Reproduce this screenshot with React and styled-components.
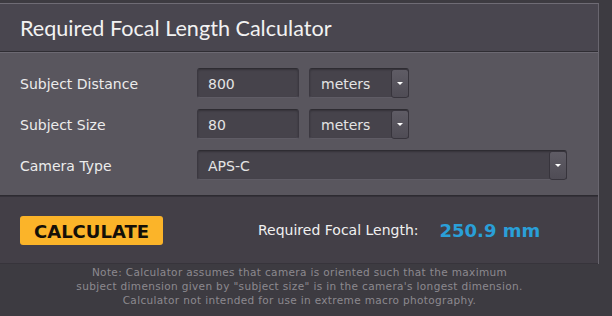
import React from "react";
import styled, { createGlobalStyle } from "styled-components";

const GlobalStyle = createGlobalStyle`
  body {
    margin: 0;
    background: #3d3b41;
    font-family: "DejaVu Sans", Verdana, sans-serif;
  }
`;

const Page = styled.div`
  width: 612px;
  height: 316px;
  overflow: hidden;
  padding-top: 3px;
  box-sizing: border-box;
`;

const Panel = styled.div`
  width: 599px;
  border-top: 1px solid #6f6c75;
  border-right: 1px solid #69666f;
  box-sizing: border-box;
`;

const Header = styled.div`
  height: 47px;
  display: flex;
  align-items: center;
  padding-left: 20px;
  background: #49464f;
  border-bottom: 1px solid #2f2d33;
`;

const Title = styled.h1`
  margin: 0;
  font-family: Lato, "Open Sans", sans-serif;
  font-weight: 400;
  font-size: 21.6px;
  color: #f2f2f2;
`;

const Form = styled.div`
  display: grid;
  grid-template-columns: 167px 102px 100px;
  column-gap: 10px;
  row-gap: 11px;
  padding: 15px 0 15px 20px;
  background: #59565e;
  border-top: 1px solid #6c6972;
  border-bottom: 1px solid #2d2b31;
`;

const Label = styled.label`
  display: flex;
  align-items: center;
  padding-top: 2px;
  box-sizing: border-box;
  font-size: 14px;
  color: #ececec;
  height: 30px;
`;

const Field = styled.div`
  position: relative;
  height: 30px;
  box-sizing: border-box;
  display: flex;
  align-items: center;
  padding-left: ${({ $pad }) => $pad || 10}px;
  padding-top: 2px;
  background: #46434b;
  border: 1px solid #3b3840;
  border-top-color: #2e2c32;
  border-bottom-color: #5f5c65;
  border-radius: 3px;
  box-shadow: inset 0 1px 2px rgba(0, 0, 0, 0.25);
  font-size: 14px;
  color: #e4e4e4;
  grid-column: ${({ $span }) => ($span ? "2 / span 2" : "auto")};
  width: ${({ $w }) => ($w ? `${$w}px` : "auto")};
`;

const DropButton = styled.span`
  position: absolute;
  top: 0;
  right: -1px;
  bottom: -1px;
  width: 18px;
  border-radius: 3px;
  background: linear-gradient(#5f5c65, #4f4c55);
  border: 1px solid #37343c;
  box-sizing: border-box;
  display: flex;
  align-items: center;
  justify-content: center;

  &::after {
    content: "";
    border-left: 3px solid transparent;
    border-right: 3px solid transparent;
    border-top: 3px solid #ffffff;
  }
`;

const Footer = styled.div`
  height: 66px;
  display: flex;
  align-items: center;
  padding-left: 20px;
  background: #433f47;
  border-top: 1px solid #35323a;
  border-bottom: 1px solid #37343b;
`;

const CalcButton = styled.button`
  width: 143px;
  height: 29px;
  border: none;
  border-radius: 3px;
  background: #fbb429;
  font-family: "DejaVu Sans", Verdana, sans-serif;
  font-weight: 700;
  font-size: 18px;
  color: #141008;
  padding: 3px 0 0;
  cursor: pointer;
`;

const ResultLabel = styled.span`
  margin-left: 95px;
  font-size: 14px;
  color: #f0f0f0;
`;

const ResultValue = styled.span`
  margin-left: 21px;
  font-size: 18px;
  font-weight: 700;
  color: #2a9fd8;
`;

const Note = styled.p`
  width: 599px;
  margin: 0;
  padding-top: 1px;
  text-align: center;
  font-size: 10.5px;
  line-height: 14px;
  letter-spacing: 0.35px;
  color: #8c898f;
`;

export default function App() {
  return (
    <Page>
      <GlobalStyle />
      <Panel>
        <Header>
          <Title>Required Focal Length Calculator</Title>
        </Header>
        <Form>
          <Label>Subject Distance</Label>
          <Field>800</Field>
          <Field $pad={11}>
            meters
            <DropButton />
          </Field>
          <Label>Subject Size</Label>
          <Field>80</Field>
          <Field $pad={11}>
            meters
            <DropButton />
          </Field>
          <Label>Camera Type</Label>
          <Field $span $w={370}>
            APS-C
            <DropButton />
          </Field>
        </Form>
        <Footer>
          <CalcButton>CALCULATE</CalcButton>
          <ResultLabel>Required Focal Length:</ResultLabel>
          <ResultValue>250.9 mm</ResultValue>
        </Footer>
      </Panel>
      <Note>
        Note: Calculator assumes that camera is oriented such that the maximum
        <br />
        subject dimension given by "subject size" is in the camera's longest dimension.
        <br />
        Calculator not intended for use in extreme macro photography.
      </Note>
    </Page>
  );
}
